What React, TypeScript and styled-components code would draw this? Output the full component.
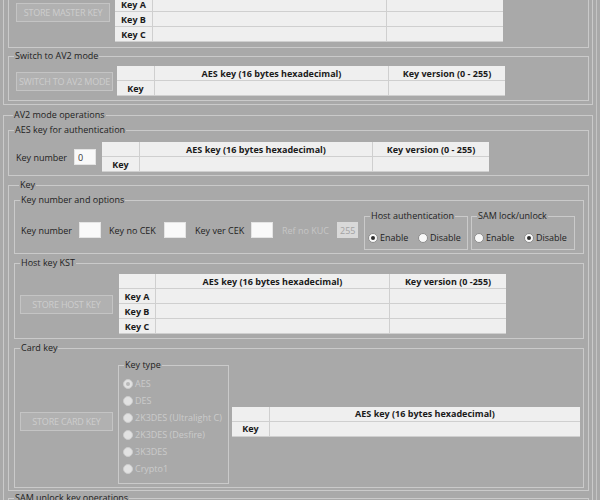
import styled, { createGlobalStyle } from 'styled-components';

const GlobalStyle = createGlobalStyle`
  html, body {
    margin: 0;
    padding: 0;
  }
  body {
    background: #a9a9a9;
    font-family: "Open Sans", "Noto Sans", sans-serif;
    font-size: 9px;
    color: #1c1c1c;
    overflow: hidden;
  }
`;

const Page = styled.div`
  box-sizing: border-box;
  width: 597px;
  height: 500px;
  padding: 0 3px;
  border-right: 1px solid #c4c4c4;
  overflow: hidden;
`;

const Group = styled.fieldset<{ $h: number; $w?: number; $mt?: number; $pl?: number; $pr?: number }>`
  box-sizing: border-box;
  height: ${p => p.$h}px;
  width: ${p => (p.$w ? `${p.$w}px` : 'auto')};
  margin: ${p => p.$mt ?? 0}px 0 0;
  padding: 0 ${p => p.$pr ?? 0}px 0 ${p => p.$pl ?? 0}px;
  border: 1px solid #cacaca;
  min-width: 0;
  flex: none;
`;

const Legend = styled.legend`
  margin-left: 5px;
  padding: 0 1px;
  height: 12px;
  line-height: 12px;
  font-size: 9px;
  white-space: nowrap;
  color: #222;
`;

const Row = styled.div<{ $pl: number; $gap?: number; $mt: number }>`
  display: flex;
  align-items: center;
  padding-left: ${p => p.$pl}px;
  gap: ${p => p.$gap ?? 0}px;
  margin-top: ${p => p.$mt}px;
`;

const Button = styled.button<{ $w: number }>`
  box-sizing: border-box;
  width: ${p => p.$w}px;
  height: 19px;
  padding: 0;
  flex: none;
  background: #b1b1b1;
  border: 1px solid #c4c4c4;
  color: #cdcdcd;
  font-family: inherit;
  font-size: 9px;
  letter-spacing: -0.2px;
  text-transform: uppercase;
  white-space: nowrap;
`;

const Grid = styled.div<{ $cols: string }>`
  display: grid;
  grid-template-columns: ${p => p.$cols};
  grid-auto-rows: 14px;
  gap: 1px;
  padding-bottom: 1px;
  background: #cfcfcf;
  flex: none;
`;

const Cell = styled.div`
  display: flex;
  align-items: center;
  justify-content: center;
  background: #efefef;
  font-weight: 700;
  font-size: 9px;
  white-space: nowrap;
  overflow: hidden;
  color: #1a1a1a;
`;

const Field = styled.div<{ $w: number; $ml?: number }>`
  display: flex;
  align-items: center;
  justify-content: space-between;
  width: ${p => p.$w}px;
  margin-left: ${p => p.$ml ?? 0}px;
  flex: none;
`;

const Label = styled.span<{ $disabled?: boolean }>`
  white-space: nowrap;
  color: ${p => (p.$disabled ? '#c6c6c6' : '#222')};
`;

const TextBox = styled.input<{ $w: number }>`
  box-sizing: border-box;
  width: ${p => p.$w}px;
  height: 16px;
  padding: 0 2px 0 3px;
  margin: 0;
  border: 1px solid #e4e4e4;
  background: #f9f9f9;
  font-family: inherit;
  font-size: 9px;
  color: #333;
  outline: none;
  &:disabled {
    padding: 0 1px 0 2px;
    background: #d9d9d9;
    border-color: #d9d9d9;
    color: #a3a3a3;
  }
`;

const RadioRow = styled.div<{ $mt: number; $pl: number }>`
  display: flex;
  align-items: center;
  margin-top: ${p => p.$mt}px;
  padding-left: ${p => p.$pl}px;
`;

const RadioColumn = styled.div`
  display: flex;
  flex-direction: column;
  padding: 4px 0 0 4px;
`;

const RadioItem = styled.label<{ $w?: number; $disabled?: boolean }>`
  display: flex;
  align-items: center;
  gap: 2px;
  height: 17px;
  width: ${p => (p.$w ? `${p.$w}px` : 'auto')};
  white-space: nowrap;
  color: ${p => (p.$disabled ? '#cbcbcb' : '#222')};
`;

const RadioDot = styled.span<{ $on?: boolean; $disabled?: boolean }>`
  box-sizing: border-box;
  width: 10px;
  height: 10px;
  border-radius: 50%;
  border: 1px solid ${p => (p.$disabled ? '#cdcdcd' : '#8c8c8c')};
  background: ${p => (p.$disabled ? '#e2e2e2' : '#f8f8f8')};
  display: flex;
  align-items: center;
  justify-content: center;
  flex: none;
  &::after {
    content: '';
    display: ${p => (p.$on ? 'block' : 'none')};
    width: 4px;
    height: 4px;
    border-radius: 50%;
    background: ${p => (p.$disabled ? '#b9b9b9' : '#2c2c2c')};
  }
`;

type KeyTableProps = { cols: number[]; headers?: string[]; rows: string[] };

function KeyTable({ cols, headers, rows }: KeyTableProps) {
  return (
    <Grid $cols={cols.map(c => `${c}px`).join(' ')}>
      {headers?.map((h, i) => (
        <Cell key={`h${i}`}>{h}</Cell>
      ))}
      {rows.map(r =>
        cols.map((_, i) => <Cell key={`${r}${i}`}>{i === 0 ? r : ''}</Cell>)
      )}
    </Grid>
  );
}

const AES = 'AES key (16 bytes hexadecimal)';
const KEY_TYPES = ['AES', 'DES', '2K3DES (Ultralight C)', '2K3DES (Desfire)', '3K3DES', 'Crypto1'];

export default function App() {
  return (
    <>
      <GlobalStyle />
      <Page>
        {/* upper section, scrolled partly off the top of the view */}
        <Group $h={154} $mt={-49} $pl={4} $pr={3}>
          <Legend />
          <Group $h={82} $mt={3}>
            <Legend />
            <Row $mt={4} $pl={7} $gap={5}>
              <Button $w={94}>Store master key</Button>
              <KeyTable cols={[37, 233, 116]} headers={['', '', '']} rows={['Key A', 'Key B', 'Key C']} />
            </Row>
          </Group>
          <Group $h={51} $mt={2}>
            <Legend>Switch to AV2 mode</Legend>
            <Row $mt={4} $pl={7} $gap={4}>
              <Button $w={97}>Switch to AV2 mode</Button>
              <KeyTable cols={[37, 233, 116]} headers={['', AES, 'Key version (0 - 255)']} rows={['Key']} />
            </Row>
          </Group>
        </Group>

        <Group $h={420} $mt={4} $pl={4} $pr={3}>
          <Legend>AV2 mode operations</Legend>
          <Group $h={52} $mt={3}>
            <Legend>AES key for authentication</Legend>
            <Row $mt={6} $pl={7} $gap={6}>
              <Field $w={80}>
                <Label>Key number</Label>
                <TextBox $w={22} readOnly value="0" />
              </Field>
              <KeyTable cols={[37, 232, 116]} headers={['', AES, 'Key version (0 - 255)']} rows={['Key']} />
            </Row>
          </Group>

          <Group $h={312} $mt={3} $pl={5} $pr={4}>
            <Legend>Key</Legend>
            <Group $h={60} $mt={3}>
              <Legend>Key number and options</Legend>
              <Row $mt={4} $pl={6}>
                <Field $w={80}>
                  <Label>Key number</Label>
                  <TextBox $w={22} readOnly value="" />
                </Field>
                <Field $w={77} $ml={8}>
                  <Label>Key no CEK</Label>
                  <TextBox $w={22} readOnly value="" />
                </Field>
                <Field $w={78} $ml={9}>
                  <Label>Key ver CEK</Label>
                  <TextBox $w={22} readOnly value="" />
                </Field>
                <Field $w={76} $ml={9}>
                  <Label $disabled>Ref no KUC</Label>
                  <TextBox $w={21} disabled value="255" />
                </Field>
                <Field $w={104} $ml={6}>
                  <Group $h={40} $w={104}>
                    <Legend>Host authentication</Legend>
                    <RadioRow $mt={7} $pl={3}>
                      <RadioItem $w={50}>
                        <RadioDot $on />
                        Enable
                      </RadioItem>
                      <RadioItem>
                        <RadioDot />
                        Disable
                      </RadioItem>
                    </RadioRow>
                  </Group>
                </Field>
                <Field $w={104} $ml={3}>
                  <Group $h={40} $w={104}>
                    <Legend>SAM lock/unlock</Legend>
                    <RadioRow $mt={7} $pl={2}>
                      <RadioItem $w={50}>
                        <RadioDot />
                        Enable
                      </RadioItem>
                      <RadioItem>
                        <RadioDot $on />
                        Disable
                      </RadioItem>
                    </RadioRow>
                  </Group>
                </Field>
              </Row>
            </Group>

            <Group $h={82} $mt={3}>
              <Legend>Host key KST</Legend>
              <Row $mt={5} $pl={5} $gap={6}>
                <Button $w={93}>Store host key</Button>
                <KeyTable
                  cols={[36, 233, 116]}
                  headers={['', AES, 'Key version (0 -255)']}
                  rows={['Key A', 'Key B', 'Key C']}
                />
              </Row>
            </Group>

            <Group $h={146} $mt={3}>
              <Legend>Card key</Legend>
              <Row $mt={5} $pl={5} $gap={5}>
                <Button $w={93}>Store card key</Button>
                <Group $h={125} $w={111}>
                  <Legend>Key type</Legend>
                  <RadioColumn>
                    {KEY_TYPES.map((t, i) => (
                      <RadioItem key={t} $disabled>
                        <RadioDot $disabled $on={i === 0} />
                        {t}
                      </RadioItem>
                    ))}
                  </RadioColumn>
                </Group>
                <Field $w={348} $ml={-2}>
                  <KeyTable cols={[37, 310]} headers={['', AES]} rows={['Key']} />
                </Field>
              </Row>
            </Group>
          </Group>

          <Group $h={60} $mt={1}>
            <Legend>SAM unlock key operations</Legend>
          </Group>
        </Group>
      </Page>
    </>
  );
}
